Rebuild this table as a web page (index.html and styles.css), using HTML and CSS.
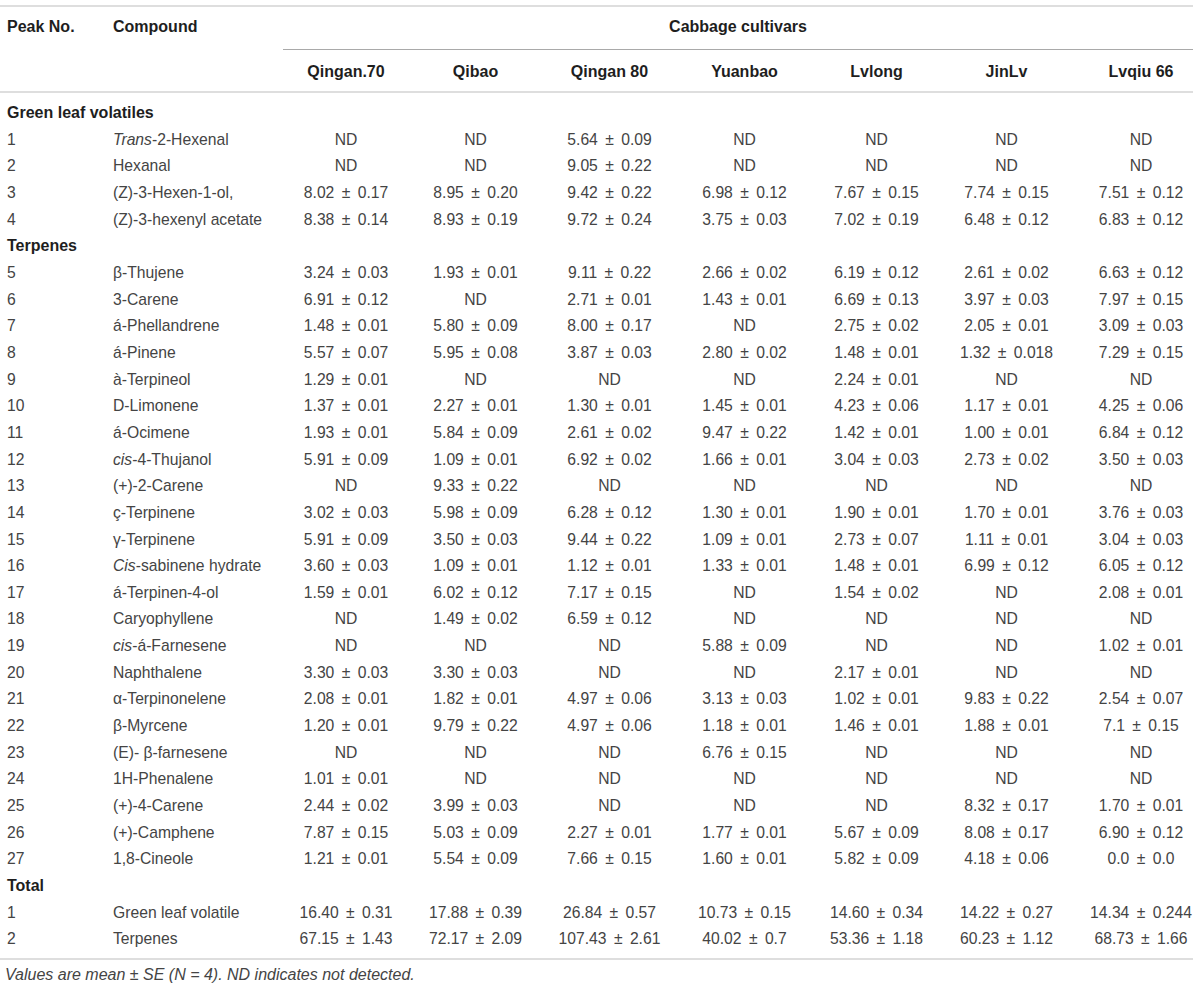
FILE: index.html
```html
<!DOCTYPE html>
<html lang="en">
<head>
<meta charset="utf-8">
<title>Volatiles of cabbage cultivars</title>
<link rel="stylesheet" href="styles.css">
</head>
<body>
<table class="data">
  <colgroup>
    <col class="c-peak"><col class="c-comp">
    <col class="c1"><col class="c2"><col class="c3"><col class="c4"><col class="c5"><col class="c6"><col class="c7">
  </colgroup>
  <thead>
    <tr class="h1">
      <th class="left">Peak No.</th>
      <th class="left">Compound</th>
      <th class="group" colspan="7">Cabbage cultivars</th>
    </tr>
    <tr class="h2">
      <th></th><th></th>
      <th>Qingan.70</th><th>Qibao</th><th>Qingan 80</th><th>Yuanbao</th><th>Lvlong</th><th>JinLv</th><th class="last">Lvqiu 66</th>
    </tr>
  </thead>
  <tbody>
    <tr class="sec first"><td colspan="9">Green leaf volatiles</td></tr>
    <tr><td>1</td><td><i>Trans</i>-2-Hexenal</td><td>ND</td><td>ND</td><td>5.64 ± 0.09</td><td>ND</td><td>ND</td><td>ND</td><td class="last">ND</td></tr>
    <tr><td>2</td><td>Hexanal</td><td>ND</td><td>ND</td><td>9.05 ± 0.22</td><td>ND</td><td>ND</td><td>ND</td><td class="last">ND</td></tr>
    <tr><td>3</td><td>(Z)-3-Hexen-1-ol,</td><td>8.02 ± 0.17</td><td>8.95 ± 0.20</td><td>9.42 ± 0.22</td><td>6.98 ± 0.12</td><td>7.67 ± 0.15</td><td>7.74 ± 0.15</td><td class="last">7.51 ± 0.12</td></tr>
    <tr><td>4</td><td>(Z)-3-hexenyl acetate</td><td>8.38 ± 0.14</td><td>8.93 ± 0.19</td><td>9.72 ± 0.24</td><td>3.75 ± 0.03</td><td>7.02 ± 0.19</td><td>6.48 ± 0.12</td><td class="last">6.83 ± 0.12</td></tr>
    <tr class="sec"><td colspan="9">Terpenes</td></tr>
    <tr><td>5</td><td>β-Thujene</td><td>3.24 ± 0.03</td><td>1.93 ± 0.01</td><td>9.11 ± 0.22</td><td>2.66 ± 0.02</td><td>6.19 ± 0.12</td><td>2.61 ± 0.02</td><td class="last">6.63 ± 0.12</td></tr>
    <tr><td>6</td><td>3-Carene</td><td>6.91 ± 0.12</td><td>ND</td><td>2.71 ± 0.01</td><td>1.43 ± 0.01</td><td>6.69 ± 0.13</td><td>3.97 ± 0.03</td><td class="last">7.97 ± 0.15</td></tr>
    <tr><td>7</td><td>á-Phellandrene</td><td>1.48 ± 0.01</td><td>5.80 ± 0.09</td><td>8.00 ± 0.17</td><td>ND</td><td>2.75 ± 0.02</td><td>2.05 ± 0.01</td><td class="last">3.09 ± 0.03</td></tr>
    <tr><td>8</td><td>á-Pinene</td><td>5.57 ± 0.07</td><td>5.95 ± 0.08</td><td>3.87 ± 0.03</td><td>2.80 ± 0.02</td><td>1.48 ± 0.01</td><td>1.32 ± 0.018</td><td class="last">7.29 ± 0.15</td></tr>
    <tr><td>9</td><td>à-Terpineol</td><td>1.29 ± 0.01</td><td>ND</td><td>ND</td><td>ND</td><td>2.24 ± 0.01</td><td>ND</td><td class="last">ND</td></tr>
    <tr><td>10</td><td>D-Limonene</td><td>1.37 ± 0.01</td><td>2.27 ± 0.01</td><td>1.30 ± 0.01</td><td>1.45 ± 0.01</td><td>4.23 ± 0.06</td><td>1.17 ± 0.01</td><td class="last">4.25 ± 0.06</td></tr>
    <tr><td>11</td><td>á-Ocimene</td><td>1.93 ± 0.01</td><td>5.84 ± 0.09</td><td>2.61 ± 0.02</td><td>9.47 ± 0.22</td><td>1.42 ± 0.01</td><td>1.00 ± 0.01</td><td class="last">6.84 ± 0.12</td></tr>
    <tr><td>12</td><td><i>cis</i>-4-Thujanol</td><td>5.91 ± 0.09</td><td>1.09 ± 0.01</td><td>6.92 ± 0.02</td><td>1.66 ± 0.01</td><td>3.04 ± 0.03</td><td>2.73 ± 0.02</td><td class="last">3.50 ± 0.03</td></tr>
    <tr><td>13</td><td>(+)-2-Carene</td><td>ND</td><td>9.33 ± 0.22</td><td>ND</td><td>ND</td><td>ND</td><td>ND</td><td class="last">ND</td></tr>
    <tr><td>14</td><td>ç-Terpinene</td><td>3.02 ± 0.03</td><td>5.98 ± 0.09</td><td>6.28 ± 0.12</td><td>1.30 ± 0.01</td><td>1.90 ± 0.01</td><td>1.70 ± 0.01</td><td class="last">3.76 ± 0.03</td></tr>
    <tr><td>15</td><td>γ-Terpinene</td><td>5.91 ± 0.09</td><td>3.50 ± 0.03</td><td>9.44 ± 0.22</td><td>1.09 ± 0.01</td><td>2.73 ± 0.07</td><td>1.11 ± 0.01</td><td class="last">3.04 ± 0.03</td></tr>
    <tr><td>16</td><td><i>Cis</i>-sabinene hydrate</td><td>3.60 ± 0.03</td><td>1.09 ± 0.01</td><td>1.12 ± 0.01</td><td>1.33 ± 0.01</td><td>1.48 ± 0.01</td><td>6.99 ± 0.12</td><td class="last">6.05 ± 0.12</td></tr>
    <tr><td>17</td><td>á-Terpinen-4-ol</td><td>1.59 ± 0.01</td><td>6.02 ± 0.12</td><td>7.17 ± 0.15</td><td>ND</td><td>1.54 ± 0.02</td><td>ND</td><td class="last">2.08 ± 0.01</td></tr>
    <tr><td>18</td><td>Caryophyllene</td><td>ND</td><td>1.49 ± 0.02</td><td>6.59 ± 0.12</td><td>ND</td><td>ND</td><td>ND</td><td class="last">ND</td></tr>
    <tr><td>19</td><td><i>cis</i>-á-Farnesene</td><td>ND</td><td>ND</td><td>ND</td><td>5.88 ± 0.09</td><td>ND</td><td>ND</td><td class="last">1.02 ± 0.01</td></tr>
    <tr><td>20</td><td>Naphthalene</td><td>3.30 ± 0.03</td><td>3.30 ± 0.03</td><td>ND</td><td>ND</td><td>2.17 ± 0.01</td><td>ND</td><td class="last">ND</td></tr>
    <tr><td>21</td><td>α-Terpinonelene</td><td>2.08 ± 0.01</td><td>1.82 ± 0.01</td><td>4.97 ± 0.06</td><td>3.13 ± 0.03</td><td>1.02 ± 0.01</td><td>9.83 ± 0.22</td><td class="last">2.54 ± 0.07</td></tr>
    <tr><td>22</td><td>β-Myrcene</td><td>1.20 ± 0.01</td><td>9.79 ± 0.22</td><td>4.97 ± 0.06</td><td>1.18 ± 0.01</td><td>1.46 ± 0.01</td><td>1.88 ± 0.01</td><td class="last">7.1 ± 0.15</td></tr>
    <tr><td>23</td><td>(E)- β-farnesene</td><td>ND</td><td>ND</td><td>ND</td><td>6.76 ± 0.15</td><td>ND</td><td>ND</td><td class="last">ND</td></tr>
    <tr><td>24</td><td>1H-Phenalene</td><td>1.01 ± 0.01</td><td>ND</td><td>ND</td><td>ND</td><td>ND</td><td>ND</td><td class="last">ND</td></tr>
    <tr><td>25</td><td>(+)-4-Carene</td><td>2.44 ± 0.02</td><td>3.99 ± 0.03</td><td>ND</td><td>ND</td><td>ND</td><td>8.32 ± 0.17</td><td class="last">1.70 ± 0.01</td></tr>
    <tr><td>26</td><td>(+)-Camphene</td><td>7.87 ± 0.15</td><td>5.03 ± 0.09</td><td>2.27 ± 0.01</td><td>1.77 ± 0.01</td><td>5.67 ± 0.09</td><td>8.08 ± 0.17</td><td class="last">6.90 ± 0.12</td></tr>
    <tr><td>27</td><td>1,8-Cineole</td><td>1.21 ± 0.01</td><td>5.54 ± 0.09</td><td>7.66 ± 0.15</td><td>1.60 ± 0.01</td><td>5.82 ± 0.09</td><td>4.18 ± 0.06</td><td class="last">0.0 ± 0.0</td></tr>
    <tr class="sec"><td colspan="9">Total</td></tr>
    <tr><td>1</td><td>Green leaf volatile</td><td>16.40 ± 0.31</td><td>17.88 ± 0.39</td><td>26.84 ± 0.57</td><td>10.73 ± 0.15</td><td>14.60 ± 0.34</td><td>14.22 ± 0.27</td><td class="last">14.34 ± 0.244</td></tr>
    <tr class="end"><td>2</td><td>Terpenes</td><td>67.15 ± 1.43</td><td>72.17 ± 2.09</td><td>107.43 ± 2.61</td><td>40.02 ± 0.7</td><td>53.36 ± 1.18</td><td>60.23 ± 1.12</td><td class="last">68.73 ± 1.66</td></tr>
  </tbody>
</table>
<p class="note">Values are mean ± SE (N = 4). ND indicates not detected.</p>
</body>
</html>
```

FILE: styles.css
```css
html, body {
  margin: 0;
  padding: 0;
  background: #ffffff;
}

body {
  font-family: "Liberation Sans", Arial, Helvetica, sans-serif;
  font-size: 15.7px;
  color: #444444;
}

.data {
  width: 1193px;
  margin-top: 5px;
  table-layout: fixed;
  border-collapse: separate;
  border-spacing: 0;
}

.c-peak { width: 106px; }
.c-comp { width: 177px; }
.c1 { width: 126px; }
.c2 { width: 133px; }
.c3 { width: 135px; }
.c4 { width: 135px; }
.c5 { width: 129px; }
.c6 { width: 131px; }
.c7 { width: 121px; }

.data th {
  font-size: 16px;
  font-weight: bold;
  color: #1e1e1e;
  text-align: center;
  padding: 0;
  line-height: 18px;
  white-space: nowrap;
}

.data th.left {
  text-align: left;
  padding-left: 7px;
}

.h1 th {
  border-top: 2px solid #dedede;
  border-bottom: 1px solid transparent;
  padding-top: 11px;
  padding-bottom: 13px;
}

.h1 th.group {
  border-bottom-color: #a9a9a9;
}

.h2 th {
  padding-top: 13px;
  padding-bottom: 10px;
  border-bottom: 2px solid #dedede;
}

.data td {
  padding: 0;
  line-height: 26.65px;
  text-align: center;
  white-space: nowrap;
}

.data td:nth-child(n+3) {
  word-spacing: 3px;
}

.data td:nth-child(1),
.data td:nth-child(2) {
  text-align: left;
  padding-left: 7px;
}

.data .last {
  padding-left: 17px;
}

.data tr.sec td {
  text-align: left;
  padding-left: 7px;
  font-size: 16px;
  font-weight: bold;
  color: #1e1e1e;
}

.data tr.first td {
  padding-top: 7px;
}

.data tr.end td {
  padding-bottom: 5px;
  border-bottom: 2px solid #dedede;
}

.note {
  margin: 6px 0 0;
  padding-left: 5px;
  font-size: 16px;
  line-height: 18px;
  font-style: italic;
  color: #444444;
}
```
